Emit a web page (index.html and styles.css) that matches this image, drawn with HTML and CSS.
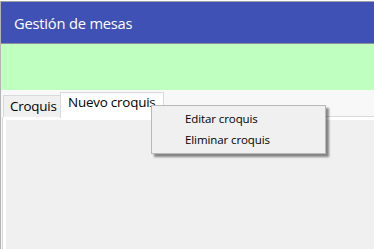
FILE: index.html
```html
<!DOCTYPE html>
<html lang="es">
<head>
<meta charset="utf-8">
<title>Gestión de mesas</title>
<link rel="stylesheet" href="styles.css">
</head>
<body>
<div class="window">
  <header class="header"><span class="title">Gestión de mesas</span></header>
  <div class="banner"></div>
  <div class="tabarea">
    <div class="tabstrip">
      <div class="tab">Croquis</div>
      <div class="tab active">Nuevo croquis</div>
      <div class="tabfill"></div>
    </div>
    <div class="panel"><div class="panel-inner"></div></div>
  </div>
  <ul class="menu">
    <li class="menu-item">Editar croquis</li>
    <li class="menu-item">Eliminar croquis</li>
  </ul>
</div>
</body>
</html>
```
FILE: styles.css
```css
html, body {
  margin: 0;
  padding: 0;
  background: #ffffff;
  height: 100%;
  overflow: hidden;
}
body {
  padding-top: 1px;
  box-sizing: border-box;
  font-family: "Open Sans", "Noto Sans", sans-serif;
}
.window {
  position: relative;
  height: 248px;
  border-top: 1px solid #a0a0a0;
  border-left: 1px solid #b4b4b4;
  display: flex;
  flex-direction: column;
}
.header {
  height: 41px;
  background: #3f51b5;
  border-bottom: 1px solid #8e8e9e;
  display: flex;
  align-items: center;
  padding-left: 13px;
}
.title {
  color: #ffffff;
  font-size: 14.7px;
  letter-spacing: -0.2px;
  margin-top: 1px;
}
.banner {
  height: 46px;
  background: #bfffbf;
}
.tabarea {
  flex: 1;
  background: #f8f8f8;
  display: flex;
  flex-direction: column;
  padding-top: 2px;
}
.tabstrip {
  display: flex;
  align-items: flex-end;
  height: 25px;
}
.tab {
  box-sizing: border-box;
  height: 22px;
  margin-left: 2px;
  padding: 0 2px 0 6px;
  width: 58px;
  background: #f0f0f0;
  border: 1px solid #d9d9d9;
  border-bottom: none;
  color: #000;
  font-size: 13.4px;
  line-height: 21px;
  letter-spacing: -0.2px;
  white-space: nowrap;
}
.tab.active {
  margin-left: -1px;
  width: 104px;
  background: #ffffff;
  line-height: 18px;
  padding-left: 7px;
  z-index: 1;
  margin-bottom: -1px;
  height: 26px;
}
.tabfill {
  flex: 1;
  border-bottom: 1px solid #d9d9d9;
}
.panel {
  flex: 1;
  margin-left: 1px;
  background: #ffffff;
  border-left: 1px solid #d9d9d9;
  padding: 3px 0 0 3px;
  display: flex;
}
.panel-inner {
  flex: 1;
  background: #f0f0f0;
}
.menu {
  position: absolute;
  left: 150px;
  top: 103px;
  width: 173px;
  margin: 0;
  padding: 2px 0 3px;
  list-style: none;
  background: #f0f0f0;
  border: 1px solid #b9b9b9;
  box-shadow: 3px 3px 2px rgba(0, 0, 0, 0.45);
  z-index: 5;
}
.menu-item {
  height: 21px;
  line-height: 21px;
  padding-left: 33px;
  font-size: 11.5px;
  color: #000;
  letter-spacing: -0.1px;
}
```
